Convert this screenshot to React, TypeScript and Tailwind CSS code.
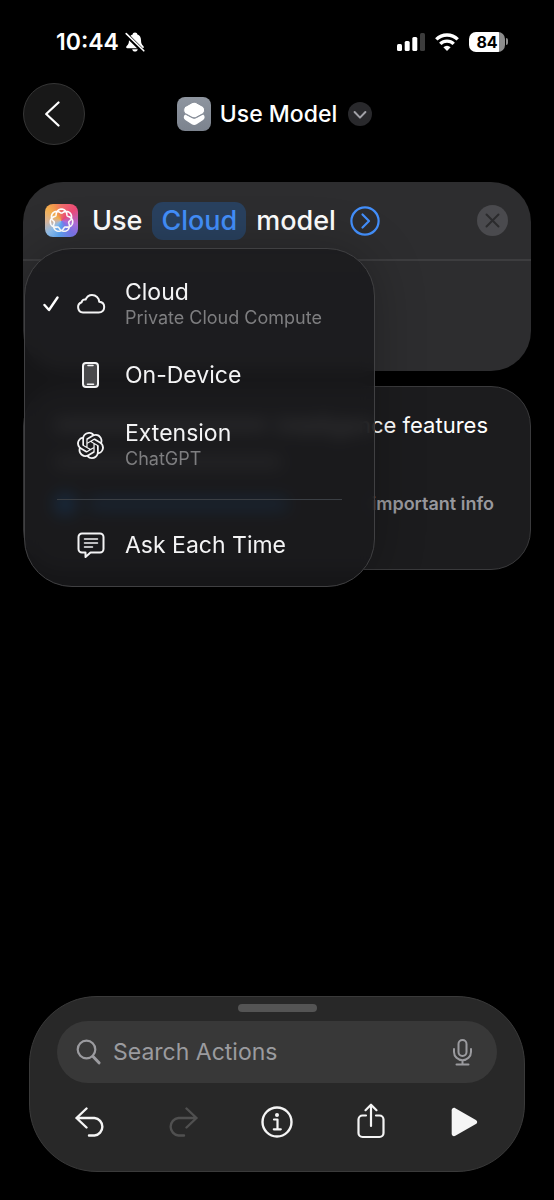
import type { ReactNode } from "react";
import { SiOpenai } from "react-icons/si";

const FONT = "font-['Inter','Liberation_Sans',sans-serif]";

const rosette = (() => {
  const points: string[] = [];
  for (let i = 0; i <= 280; i++) {
    const t = (i / 280) * Math.PI * 4;
    const r = 9.4 + 2 * Math.cos(3.5 * t);
    const a = t - Math.PI / 2 + 0.1 * Math.sin(3.5 * t);
    points.push(`${(16.5 + r * Math.cos(a)).toFixed(2)} ${(16.5 + r * Math.sin(a)).toFixed(2)}`);
  }
  return `M${points.join("L")}Z`;
})();

function BellSlash() {
  return (
    <svg width="20" height="20" viewBox="0 0 20 20" aria-hidden="true">
      <path
        d="M10 .6C8.600.6 7.700 1.500 7.600 2.600 5.200 3.500 4 5.500 4 8c0 3.600-.8 4.600-2.300 6-.9.900-.7 2.200.7 2.200h15.200c1.400 0 1.600-1.300.7-2.200C16.800 12.600 16 11.600 16 8c0-2.500-1.200-4.500-3.600-5.400C12.300 1.500 11.400.6 10 .6ZM7.200 17.300h5.600C12.500 18.700 11.400 19.600 10 19.600s-2.500-.9-2.800-2.300Z"
        fill="#fff"
      />
      <path d="M1 2.200 18.200 19.400" stroke="#000" strokeWidth="4.200" />
      <path d="M1.200 1.600 18.800 18.800" stroke="#fff" strokeWidth="1.600" strokeLinecap="round" />
    </svg>
  );
}

function StatusBar() {
  return (
    <div className="flex h-[83px] items-center justify-between pl-14 pr-[46px]">
      <div className="flex items-center gap-[6px] text-[23px] font-semibold leading-7">
        <span>10:44</span>
        <BellSlash />
      </div>
      <div className="flex items-center gap-[10px]">
        <svg width="28" height="18" viewBox="0 0 28 18" aria-label="Signal">
          <rect x="0" y="11" width="5" height="7" rx="1.500" fill="#fff" />
          <rect x="7.700" y="8" width="5" height="10" rx="1.500" fill="#fff" />
          <rect x="15.300" y="4" width="5" height="14" rx="1.500" fill="#fff" />
          <rect x="23" y="0" width="5" height="18" rx="1.500" fill="#3c3c3c" />
        </svg>
        <svg width="24" height="18" viewBox="0 0 24 18" aria-label="Wi-Fi">
          <g fill="none" stroke="#fff" strokeWidth="3.400">
            <path d="M1.300 6.400a15.200 15.200 0 0 1 21.400 0" />
            <path d="M5.300 10.900a9.500 9.500 0 0 1 13.400 0" />
          </g>
          <path d="M12 18 8.400 14.300a5 5 0 0 1 7.200 0Z" fill="#fff" />
        </svg>
        <div className="flex items-center gap-px">
          <div className="flex h-5 w-9 items-center justify-center rounded-[7px] bg-[linear-gradient(90deg,#fff_84%,#8c8c8c_84%)] text-[16px] font-bold leading-5 text-black">
            84
          </div>
          <div className="h-[7px] w-[2px] rounded-r-full bg-[#8c8c8c]" />
        </div>
      </div>
    </div>
  );
}

function Header() {
  return (
    <header className="grid h-[62px] grid-cols-[62px_1fr_62px] items-center pl-[23px] pr-7">
      <button
        aria-label="Back"
        className="flex size-[62px] items-center justify-center rounded-full border border-[#353535] bg-[#181818]"
      >
        <svg width="18" height="26" viewBox="0 0 18 26" fill="none" stroke="#fff" strokeWidth="2.200" strokeLinecap="round" strokeLinejoin="round">
          <path d="M13.500 1.500 1.200 13l12.300 11.500" />
        </svg>
      </button>
      <button className="flex items-center justify-self-center text-[23px] font-medium leading-7">
        <svg width="34" height="34" viewBox="0 0 34 34" aria-hidden="true">
          <defs>
            <linearGradient id="shortcut" x1="0" y1="0" x2="0" y2="1">
              <stop offset="0" stopColor="#8e959f" />
              <stop offset="1" stopColor="#7c838e" />
            </linearGradient>
          </defs>
          <rect width="34" height="34" rx="8" fill="url(#shortcut)" />
          <path
            d="M8.200 17.600c-2 1.500-1.900 4.300.1 5.400l6.500 4.200c1.500.9 3.300.9 4.800 0l6.500-4.200c2-1.100 2.100-3.900.1-5.400l-6.600 3.500c-1.600.8-3.200.8-4.800 0Z"
            fill="#fff"
          />
          <path
            d="M14.900 5.800 8.500 9.400c-2.400 1.500-2.400 5.800 0 7.300l6.400 3.500c1.500.8 3 .8 4.500 0l6.400-3.500c2.400-1.500 2.400-5.800 0-7.300l-6.400-3.600c-1.500-.8-3-.8-4.500 0Z"
            fill="#fff"
            stroke="#858c97"
            strokeWidth="1"
          />
        </svg>
        <span className="ml-[9px] mr-[11px]">Use Model</span>
        <svg width="24" height="24" viewBox="0 0 24 24" fill="none" aria-hidden="true">
          <circle cx="12" cy="12" r="12" fill="#29292c" />
          <path d="m6.600 10 5.400 5.600 5.400-5.600" stroke="#a2a2a8" strokeWidth="2" strokeLinecap="round" strokeLinejoin="round" />
        </svg>
      </button>
    </header>
  );
}

function MenuItem({ icon, title, detail, checked }: { icon: ReactNode; title: string; detail?: string; checked?: boolean }) {
  return (
    <button
      role="menuitemradio"
      aria-checked={!!checked}
      className={`flex w-full items-center text-left ${detail ? "h-[82px]" : "h-[59px]"}`}
    >
      <span className="flex w-[50px] justify-end pr-4">
        {checked && (
          <svg width="16" height="16" viewBox="0 0 16 16" fill="none" stroke="#fff" strokeWidth="2.400" strokeLinecap="round" strokeLinejoin="round">
            <path d="m1.500 9 4.500 5L14.500 1.500" />
          </svg>
        )}
      </span>
      <span className="flex w-[31px] justify-center">{icon}</span>
      <span className="ml-[19px] flex flex-col">
        <span className="text-[23px] leading-7 text-[#f4f4f5]">{title}</span>
        {detail && <span className="text-[18px] leading-6 text-[#7e7e80]">{detail}</span>}
      </span>
    </button>
  );
}

function ModelMenu() {
  return (
    <div
      role="menu"
      className="absolute left-px top-[66px] z-10 w-[351px] rounded-[48px] border border-[#404042] bg-[#1a1a1c]/85 pb-3 pt-[14px] shadow-[0_0_50px_rgba(0,0,0,0.25)] backdrop-blur-[8px]"
    >
      <MenuItem
        checked
        title="Cloud"
        detail="Private Cloud Compute"
        icon={
          <svg width="30" height="22" viewBox="0 0 30 22" fill="none" stroke="#f4f4f5" strokeWidth="2" strokeLinejoin="round">
            <path d="M7 19.500a5.300 5.300 0 0 1-1.300-10.300c.1-1.800 2-3.200 3.900-2.600C10.900 3.600 13 2 16 2c4 0 7 2.900 7.200 6.800 3 .3 5 2.500 5 5.300 0 3.100-2.300 5.400-5.500 5.400Z" />
          </svg>
        }
      />
      <MenuItem
        title="On-Device"
        icon={
          <svg width="17" height="26" viewBox="0 0 17 26" fill="none">
            <rect x="1" y="1" width="15" height="24" rx="3" fill="#4a4a4c" stroke="#f4f4f5" strokeWidth="2" />
            <path d="M6 3.500h5M5.500 22.300h6" stroke="#f4f4f5" strokeWidth="1.600" strokeLinecap="round" />
          </svg>
        }
      />
      <MenuItem title="Extension" detail="ChatGPT" icon={<SiOpenai size={27} color="#f4f4f5" />} />
      <hr className="mx-8 mb-[15px] mt-[13px] border-[#3b3f44]" />
      <MenuItem
        title="Ask Each Time"
        icon={
          <svg width="28" height="26" viewBox="0 0 28 26" fill="none" stroke="#f4f4f5" strokeLinecap="round" strokeLinejoin="round">
            <path d="M5 1.500h18A3.500 3.500 0 0 1 26.500 5v12a3.500 3.500 0 0 1-3.500 3.500H13.500L8.500 25v-4.500H5A3.500 3.500 0 0 1 1.500 17V5A3.500 3.500 0 0 1 5 1.500Z" strokeWidth="2" />
            <path d="M7.500 7h13M7.500 11h13M7.500 15h8" strokeWidth="1.500" />
          </svg>
        }
      />
    </div>
  );
}

function ActionCard() {
  return (
    <section className="relative z-10 h-[189px] rounded-[40px] bg-[#2d2d2f]">
      <div className="flex h-[77px] items-center pl-[22px] pr-[23px] text-[27px] font-medium leading-8">
        <svg width="33" height="33" viewBox="0 0 33 33" aria-hidden="true" className="rounded-lg bg-[conic-gradient(from_0deg,#ee6f6a,#ee4a78_50deg,#b070e0_105deg,#7d78f0_140deg,#5fa8f5_190deg,#8fc0f0_225deg,#d8b8a0_265deg,#f5b04f_310deg,#f2934e_335deg,#ee6f6a)]">
          <path d={rosette} fill="none" stroke="#fff" strokeWidth="1.600" />
        </svg>
        <span className="ml-[14px]">Use</span>
        <button className="ml-[10px] h-[38px] rounded-[11px] bg-[#29415f] px-[9px] text-[#438ffb]">Cloud</button>
        <span className="ml-[10px]">model</span>
        <button aria-label="Show more" className="ml-[14px]">
          <svg width="30" height="30" viewBox="0 0 30 30" fill="none" stroke="#438ffb" strokeWidth="2.200" strokeLinecap="round" strokeLinejoin="round">
            <circle cx="15" cy="15" r="13.600" />
            <path d="m12.500 8.500 6.500 6.500-6.500 6.500" />
          </svg>
        </button>
        <button aria-label="Remove" className="ml-auto">
          <svg width="31" height="31" viewBox="0 0 31 31" fill="none">
            <circle cx="15.500" cy="15.500" r="15.500" fill="#4a4a4e" />
            <path d="m9.500 9.500 12 12m0-12-12 12" stroke="#2b2b2d" strokeWidth="2" strokeLinecap="round" />
          </svg>
        </button>
      </div>
      <hr className="border-t-2 border-[#3d3d3f]" />
      <ModelMenu />
    </section>
  );
}

function InfoCard() {
  return (
    <section className="mt-[15px] h-[184px] rounded-[40px] border border-[#3a3a3c] bg-[#1c1c1e] pl-[30px] pr-9 pt-[23px]">
      <div className="flex items-center justify-between gap-2">
        <div className="h-3 flex-1 rounded-full bg-white/40" />
        <p className="pr-[6px] text-[22px] leading-[30px]">Intelligence features</p>
      </div>
      <div className="mt-4 h-3 w-[228px] rounded-full bg-white/30" />
      <div className="mt-[23px] flex items-center gap-3">
        <div className="size-[22px] rounded-full bg-[#0a84ff]" />
        <div className="h-3 w-[200px] rounded-full bg-[#0a84ff]/70" />
        <p className="ml-auto text-[18px] font-semibold leading-[26px] text-[#98989d]">important info</p>
      </div>
    </section>
  );
}

const stroke = { fill: "none", stroke: "currentColor", strokeWidth: 2.4, strokeLinecap: "round", strokeLinejoin: "round" } as const;

function Tool({ label, children, disabled }: { label: string; children: ReactNode; disabled?: boolean }) {
  return (
    <button aria-label={label} disabled={disabled} className="flex h-10 items-center justify-center text-[#f5f5f5] disabled:text-[#505050]">
      {children}
    </button>
  );
}

function BottomPanel() {
  return (
    <footer className="mx-[29px] mb-[28px] mt-auto rounded-[68px] border border-[#3a3a3a] bg-[#282828] pb-[29px] pt-[7px]">
      <div className="mx-auto h-2 w-[79px] rounded-full bg-[#545454]" />
      <label className="mx-[27px] mt-[9px] flex h-[62px] items-center rounded-full bg-[#383838] pl-[19px] pr-6 text-[#9b9b9f]">
        <svg width="25" height="26" viewBox="0 0 25 26" aria-hidden="true" {...stroke}>
          <circle cx="10.500" cy="10.500" r="8.800" strokeWidth="2.200" />
          <path d="m17 17.500 6 6.300" strokeWidth="3" />
        </svg>
        <input
          type="search"
          aria-label="Search Actions"
          placeholder="Search Actions"
          className="ml-3 min-w-0 flex-1 bg-transparent text-[23px] leading-8 outline-none placeholder:text-[#9b9b9f]"
        />
        <svg width="21" height="28" viewBox="0 0 21 28" aria-label="Dictate" {...stroke} strokeWidth="2">
          <rect x="6.500" y="2" width="8" height="16" rx="4" />
          <path d="M2 11v3a8.500 8.200 0 0 0 17 0v-3M10.500 22.300v4M4.500 26.500h12" />
        </svg>
      </label>
      <div className="mx-[13px] mt-[19px] grid grid-cols-5">
        <Tool label="Undo">
          <svg width="30" height="30" viewBox="0 0 30 30" {...stroke}>
            <path d="M11.500 1.500 1.500 11l10 9.500M1.500 11h18a8.800 8.800 0 0 1 0 17.500h-5.500" />
          </svg>
        </Tool>
        <Tool label="Redo" disabled>
          <svg width="30" height="30" viewBox="0 0 30 30" {...stroke}>
            <path d="m18.500 1.500 10 9.500-10 9.500M28.500 11h-18a8.800 8.800 0 0 0 0 17.500H16" />
          </svg>
        </Tool>
        <Tool label="Info">
          <svg width="32" height="32" viewBox="0 0 32 32" {...stroke}>
            <circle cx="16" cy="16" r="14.500" />
            <path d="M13 13.500h3.500V23M12.800 23.300h7" strokeWidth="2.200" />
            <circle cx="16" cy="9" r="2" fill="currentColor" stroke="none" />
          </svg>
        </Tool>
        <Tool label="Share">
          <svg width="28" height="38" viewBox="0 0 28 38" {...stroke} strokeWidth="2.200">
            <path d="M9 12.500H5.500a4 4 0 0 0-4 4V30a4 4 0 0 0 4 4h17a4 4 0 0 0 4-4V16.500a4 4 0 0 0-4-4H19M14 23V2M8.500 7.200 14 1.700l5.500 5.500" />
          </svg>
        </Tool>
        <Tool label="Run">
          <svg width="27" height="30" viewBox="0 0 27 30" fill="currentColor">
            <path d="M.7 3.300v23.400c0 2 1.900 3 3.600 2.100l20.600-11.700c1.700-1 1.700-3.200 0-4.200L4.300 1.200C2.600.3.700 1.300.7 3.300Z" />
          </svg>
        </Tool>
      </div>
    </footer>
  );
}

export default function App() {
  return (
    <div className={`flex min-h-screen flex-col overflow-hidden bg-black text-white ${FONT}`}>
      <StatusBar />
      <Header />
      <main className="px-[23px] pb-8 pt-[37px]">
        <ActionCard />
        <InfoCard />
      </main>
      <BottomPanel />
    </div>
  );
}
